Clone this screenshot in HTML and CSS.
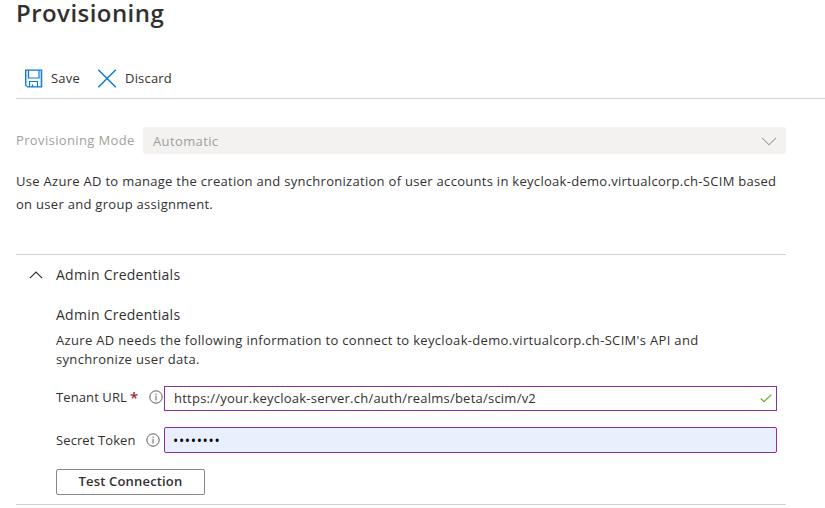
FILE: index.html
```html
<!DOCTYPE html>
<html lang="en">
<head>
<meta charset="utf-8">
<title>Provisioning</title>
<link rel="stylesheet" href="styles.css">
</head>
<body>
<header class="page-header"><h1 class="title">Provisioning</h1></header>
<nav class="toolbar">
  <button class="command save"><svg class="icon" width="18" height="19" viewBox="0 0 18 19" fill="none" stroke="#0f78d4"><path d="M1.800 2v13.500M15.400 2v15" stroke="#9ccbf0"/><path d="M.6 1.100h16.100v16.800H2.600l-2-2z" stroke-width="1.200"/><path d="M3.500 1v8h10.500V1M4.500 18v-5.500h8V18M7.500 18v-2.500" stroke-width="1.200"/></svg><span>Save</span></button>
  <button class="command discard"><svg class="icon" width="20" height="19" viewBox="0 0 20 19" fill="none" stroke="#0f78d4" stroke-width="1.5"><path d="M1.300 .7l17.500 17.500M18.800.7L1.300 18.200"/></svg><span>Discard</span></button>
</nav>
<main class="content">
  <div class="mode">
    <span class="mode-label">Provisioning Mode</span>
    <div class="select"><span>Automatic</span><svg width="16" height="9" viewBox="0 0 16 9" fill="none" stroke="#a19f9d" stroke-width="1.100"><path d="M1 .8l7 7 7-7"/></svg></div>
  </div>
  <p class="intro">Use Azure AD to manage the creation and synchronization of user accounts in keycloak-demo.virtualcorp.ch-SCIM based<br>on user and group assignment.</p>
  <section class="credentials">
    <div class="section-toggle"><svg width="14" height="8" viewBox="0 0 14 8" fill="none" stroke="#323130" stroke-width="1.200"><path d="M.9 7.200L7 1l6.100 6.200"/></svg><h2 class="heading">Admin Credentials</h2></div>
    <div class="section-body">
      <h3 class="heading sub">Admin Credentials</h3>
      <p class="help">Azure AD needs the following information to connect to keycloak-demo.virtualcorp.ch-SCIM's API and<br>synchronize user data.</p>
      <div class="field tenant">
        <div class="field-label"><span>Tenant URL</span><span class="required">*</span><svg class="info" width="14" height="14" viewBox="0 0 14 14" fill="none" stroke="#605e5c"><circle cx="7" cy="7" r="6.200"/><path d="M7 5.800v4.700M7 3.500v1.300"/></svg></div>
        <div class="input"><span class="url">https://your.keycloak-server.ch/auth/realms/beta/scim/v2</span><svg width="12" height="9" viewBox="0 0 12 9" fill="none" stroke="#6bb02f" stroke-width="1.200"><path d="M.8 4.500l3.200 3.200L11.300.8"/></svg></div>
      </div>
      <div class="field secret">
        <div class="field-label"><span>Secret Token</span><svg class="info" width="14" height="14" viewBox="0 0 14 14" fill="none" stroke="#605e5c"><circle cx="7" cy="7" r="6.200"/><path d="M7 5.800v4.700M7 3.500v1.300"/></svg></div>
        <div class="input filled"><span class="password">••••••••</span></div>
      </div>
      <button class="test">Test Connection</button>
    </div>
  </section>
</main>
</body>
</html>
```

FILE: styles.css
```css
* { box-sizing: border-box; }
body {
  margin: 0;
  padding-left: 16px;
  background: #fff;
  color: #323130;
  font: 13px/19px "Open Sans", "Noto Sans", sans-serif;
  white-space: nowrap;
}
h1, h2, h3, p { margin: 0; font-weight: 400; }
button { font: inherit; color: inherit; letter-spacing: inherit; border: 0; background: none; padding: 0; }
svg { flex: none; display: block; }
.page-header { height: 58px; }
.title { font-size: 24px; font-weight: 600; line-height: 26px; letter-spacing: .45px; }
.toolbar { display: flex; height: 41px; padding-left: 9px; border-bottom: 1px solid #d2d0ce; letter-spacing: .2px; }
.command { display: flex; align-items: center; height: 40px; }
.save { gap: 8px; width: 72px; }
.discard { gap: 8px; }
.content { width: 770px; }
.mode { display: flex; align-items: center; height: 27px; margin-top: 28px; color: #a19f9d; letter-spacing: .37px; }
.mode-label { width: 127px; }
.select { flex: 1; display: flex; align-items: center; justify-content: space-between; height: 27px; padding: 1px 9px 0 10px; background: #f3f2f1; border-radius: 2px; }
.intro { margin-top: 16px; height: 84px; line-height: 23px; letter-spacing: .29px; }
.credentials { height: 251px; border-top: 1px solid #d2d0ce; border-bottom: 1px solid #d2d0ce; }
.section-toggle { display: flex; align-items: center; gap: 13px; height: 40px; padding-left: 13px; }
.heading { font-size: 14px; line-height: 20px; letter-spacing: .25px; }
.section-body { padding-left: 40px; }
.sub { margin: 10px 0 6px; }
.help { height: 55px; line-height: 19px; letter-spacing: .325px; }
.field { display: flex; width: 721px; }
.tenant { height: 41px; }
.secret { height: 42px; }
.field-label { display: flex; width: 108px; height: 22px; align-items: center; letter-spacing: .1px; }
.secret .field-label { height: 26px; }
.info { margin-left: auto; margin-right: 1px; }
.secret .info { margin-right: 4px; }
.required { margin-left: 3px; color: #a4262c; font-size: 15px; font-weight: 600; }
.input { flex: 1; display: flex; align-items: center; justify-content: space-between; height: 25px; padding: 0 4px 0 9px; border: 1px solid #8a2da5; }
.url { letter-spacing: .235px; }
.filled { height: 26px; padding-left: 8px; background: #e8f0fe; border-radius: 2px; color: #000; }
.password { font-size: 14px; letter-spacing: .65px; }
.test { display: block; width: 149px; height: 26px; padding-bottom: 2px; border: 1px solid #8a8886; border-radius: 2px; font-weight: 600; letter-spacing: .17px; }
```
